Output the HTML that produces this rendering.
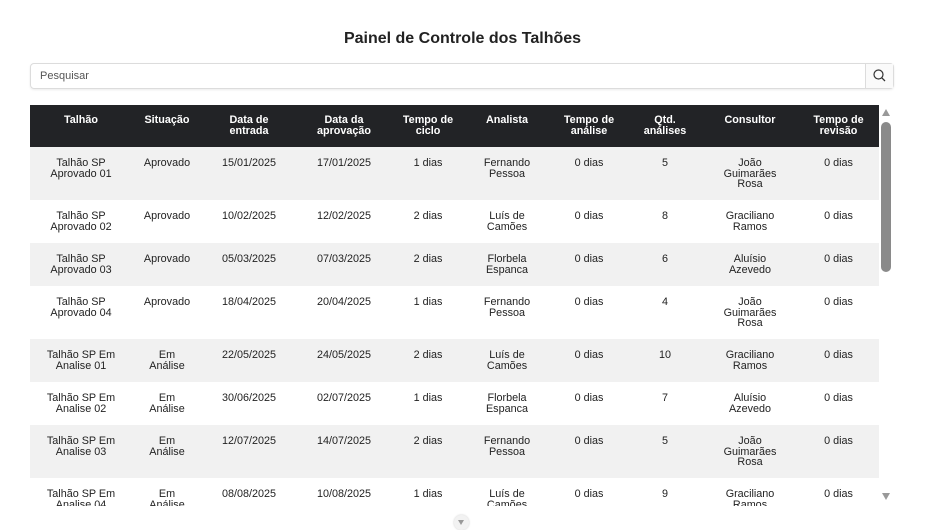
<!DOCTYPE html>
<html><head><meta charset="utf-8"><style>
body{margin:0;width:929px;height:527px;overflow:hidden;background:#fff;font-family:"Liberation Sans",sans-serif;color:#222}
h1{position:absolute;top:30px;left:0;width:925px;text-align:center;font-size:16px;margin:0;font-weight:bold;color:#222}
.search{position:absolute;left:30px;top:63px;width:862px;height:24px;border:1px solid #dcdcdc;border-radius:4px;box-shadow:0 1px 2px rgba(0,0,0,.08)}
.search span{position:absolute;left:9px;top:6px;font-size:11px;color:#555}
.search .btn{position:absolute;right:0;top:0;width:27px;height:24px;border-left:1px solid #dcdcdc;background:#fafafa}
.wrap{position:absolute;left:30px;top:105px;width:849px;height:401px;overflow:hidden}
table{border-collapse:collapse;width:849px;table-layout:fixed;font-size:10.8px;line-height:10.7px}
th{background:#222326;color:#fff;font-weight:bold;height:42px;vertical-align:top;padding:10px 2px 0;text-align:center;box-sizing:border-box}
td{vertical-align:top;text-align:center;padding:11px 2px 0;box-sizing:border-box}
tr.g td{background:#f1f1f1}
.sb{position:absolute;left:881px;top:122px;width:10px;height:150px;background:#8a8a8a;border-radius:5px}
.up{position:absolute;left:882px;top:109px;width:0;height:0;border-left:4.5px solid transparent;border-right:4.5px solid transparent;border-bottom:7px solid #999}
.dn{position:absolute;left:882px;top:493px;width:0;height:0;border-left:4.5px solid transparent;border-right:4.5px solid transparent;border-top:7px solid #999}
.circ{position:absolute;left:454px;top:515px;width:15px;height:15px;border-radius:50%;background:#f2f2f2;box-shadow:0 0 2px #ccc}
.circ:after{content:"";position:absolute;left:4px;top:5px;border-left:3.5px solid transparent;border-right:3.5px solid transparent;border-top:5px solid #999}
</style></head><body>
<h1>Painel de Controle dos Talhões</h1>
<div class="search"><span>Pesquisar</span><div class="btn"><svg width="27" height="24" viewBox="0 0 27 24"><circle cx="12.5" cy="10.5" r="4.5" fill="none" stroke="#333" stroke-width="1.2"/><path d="M15.8 13.8L19 17" stroke="#333" stroke-width="1.3"/></svg></div></div>
<div class="wrap"><table>
<colgroup><col style="width:102px"><col style="width:70px"><col style="width:94px"><col style="width:96px"><col style="width:72px"><col style="width:86px"><col style="width:78px"><col style="width:74px"><col style="width:96px"><col style="width:81px"></colgroup>
<tr><th>Talhão</th><th>Situação</th><th>Data de<br>entrada</th><th>Data da<br>aprovação</th><th>Tempo de<br>ciclo</th><th>Analista</th><th>Tempo de<br>análise</th><th>Qtd.<br>análises</th><th>Consultor</th><th>Tempo de<br>revisão</th></tr>
<tr class="g" style="height:53px"><td>Talhão SP<br>Aprovado 01</td><td>Aprovado</td><td>15/01/2025</td><td>17/01/2025</td><td>1 dias</td><td>Fernando<br>Pessoa</td><td>0 dias</td><td>5</td><td>João<br>Guimarães<br>Rosa</td><td>0 dias</td></tr>
<tr style="height:43px"><td>Talhão SP<br>Aprovado 02</td><td>Aprovado</td><td>10/02/2025</td><td>12/02/2025</td><td>2 dias</td><td>Luís de<br>Camões</td><td>0 dias</td><td>8</td><td>Graciliano<br>Ramos</td><td>0 dias</td></tr>
<tr class="g" style="height:43px"><td>Talhão SP<br>Aprovado 03</td><td>Aprovado</td><td>05/03/2025</td><td>07/03/2025</td><td>2 dias</td><td>Florbela<br>Espanca</td><td>0 dias</td><td>6</td><td>Aluísio<br>Azevedo</td><td>0 dias</td></tr>
<tr style="height:53px"><td>Talhão SP<br>Aprovado 04</td><td>Aprovado</td><td>18/04/2025</td><td>20/04/2025</td><td>1 dias</td><td>Fernando<br>Pessoa</td><td>0 dias</td><td>4</td><td>João<br>Guimarães<br>Rosa</td><td>0 dias</td></tr>
<tr class="g" style="height:43px"><td>Talhão SP Em<br>Analise 01</td><td>Em<br>Análise</td><td>22/05/2025</td><td>24/05/2025</td><td>2 dias</td><td>Luís de<br>Camões</td><td>0 dias</td><td>10</td><td>Graciliano<br>Ramos</td><td>0 dias</td></tr>
<tr style="height:43px"><td>Talhão SP Em<br>Analise 02</td><td>Em<br>Análise</td><td>30/06/2025</td><td>02/07/2025</td><td>1 dias</td><td>Florbela<br>Espanca</td><td>0 dias</td><td>7</td><td>Aluísio<br>Azevedo</td><td>0 dias</td></tr>
<tr class="g" style="height:53px"><td>Talhão SP Em<br>Analise 03</td><td>Em<br>Análise</td><td>12/07/2025</td><td>14/07/2025</td><td>2 dias</td><td>Fernando<br>Pessoa</td><td>0 dias</td><td>5</td><td>João<br>Guimarães<br>Rosa</td><td>0 dias</td></tr>
<tr style="height:43px"><td>Talhão SP Em<br>Analise 04</td><td>Em<br>Análise</td><td>08/08/2025</td><td>10/08/2025</td><td>1 dias</td><td>Luís de<br>Camões</td><td>0 dias</td><td>9</td><td>Graciliano<br>Ramos</td><td>0 dias</td></tr>
</table></div>
<div class="up"></div><div class="sb"></div><div class="dn"></div>
<div class="circ"></div>
</body></html>
